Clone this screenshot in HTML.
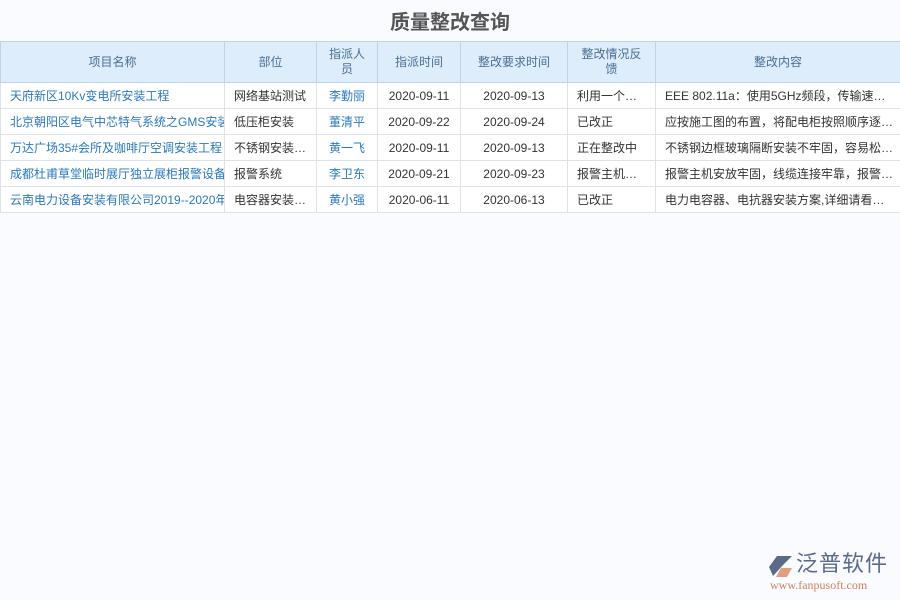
<!DOCTYPE html><html><head><meta charset="utf-8"><style>
body{margin:0;width:900px;height:600px;background:#f9fbfe;font-family:"Liberation Sans","Noto Sans CJK SC",sans-serif;overflow:hidden;position:relative}
h1{margin:0;position:absolute;top:6px;width:100%;text-align:center;font-size:20px;color:#555;font-weight:bold}
table{position:absolute;top:41px;left:0;border-collapse:collapse;table-layout:fixed;width:900px;font-size:12px}
th{background:#deedfb;color:#4a6f92;font-weight:normal;height:40px;border:1px solid #b9d3ea;line-height:15px;padding:0 4px}
td{height:25px;border:1px solid #dde3ea;background:#fff;color:#333;white-space:nowrap;overflow:hidden;padding:0 9px}
td.b{color:#2a78bd}td.c{text-align:center}
.logo{position:absolute;left:768px;top:553px}
</style></head><body>
<h1>质量整改查询</h1>
<table>
<colgroup><col style="width:224px"><col style="width:92px"><col style="width:61px"><col style="width:83px"><col style="width:107px"><col style="width:88px"><col style="width:245px"></colgroup>
<tr><th>项目名称</th><th>部位</th><th>指派人<br>员</th><th>指派时间</th><th>整改要求时间</th><th>整改情况反<br>馈</th><th>整改内容</th></tr>
<tr><td class="b">天府新区10Kv变电所安装工程</td><td>网络基站测试</td><td class="b c">李勤丽</td><td class="c">2020-09-11</td><td class="c">2020-09-13</td><td>利用一个…</td><td>EEE 802.11a：使用5GHz频段，传输速…</td></tr>
<tr><td class="b">北京朝阳区电气中芯特气系统之GMS安装</td><td>低压柜安装</td><td class="b c">董清平</td><td class="c">2020-09-22</td><td class="c">2020-09-24</td><td>已改正</td><td>应按施工图的布置，将配电柜按照顺序逐…</td></tr>
<tr><td class="b">万达广场35#会所及咖啡厅空调安装工程</td><td>不锈钢安装…</td><td class="b c">黄一飞</td><td class="c">2020-09-11</td><td class="c">2020-09-13</td><td>正在整改中</td><td>不锈钢边框玻璃隔断安装不牢固，容易松…</td></tr>
<tr><td class="b">成都杜甫草堂临时展厅独立展柜报警设备安装</td><td>报警系统</td><td class="b c">李卫东</td><td class="c">2020-09-21</td><td class="c">2020-09-23</td><td>报警主机…</td><td>报警主机安放牢固，线缆连接牢靠，报警…</td></tr>
<tr><td class="b">云南电力设备安装有限公司2019--2020年度</td><td>电容器安装…</td><td class="b c">黄小强</td><td class="c">2020-06-11</td><td class="c">2020-06-13</td><td>已改正</td><td>电力电容器、电抗器安装方案,详细请看…</td></tr>
</table>
<div class="logo">
<svg width="26" height="24" style="position:absolute;left:0;top:2px"><path d="M9 1 L24 1 L15 10 L5 21 L1 12 Z" fill="#5a6a88"/><path d="M13 13 L24 13 L19 22 L8 22 Z" fill="#e0a080"/></svg>
<div style="position:absolute;left:28px;top:-2px;font-size:22px;line-height:26px;color:#5a6a88;white-space:nowrap;letter-spacing:1px">泛普软件</div>
<div style="position:absolute;left:2px;top:26px;font-size:12px;line-height:13px;color:#d08060;font-family:'Liberation Serif',serif;white-space:nowrap">www.fanpusoft.com</div>
</div>
</body></html>
